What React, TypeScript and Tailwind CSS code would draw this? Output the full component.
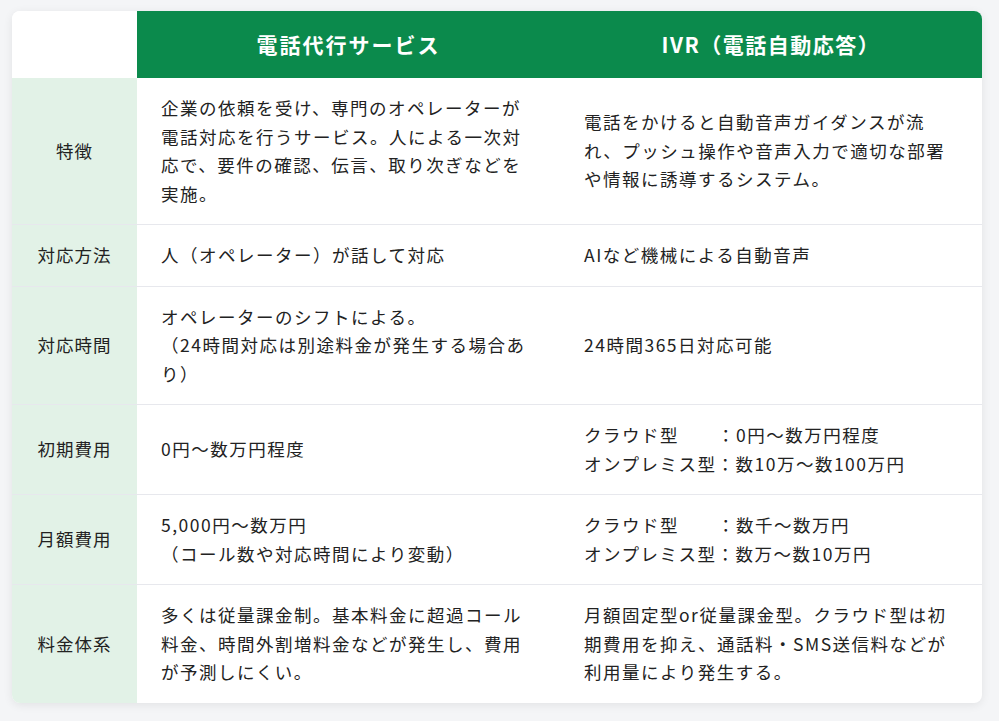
const rows: { label: string; service: string[]; ivr: string[] }[] = [
  {
    label: "特徴",
    service: ["企業の依頼を受け、専門のオペレーターが電話対応を行うサービス。人による一次対応で、要件の確認、伝言、取り次ぎなどを実施。"],
    ivr: ["電話をかけると自動音声ガイダンスが流れ、プッシュ操作や音声入力で適切な部署や情報に誘導するシステム。"],
  },
  {
    label: "対応方法",
    service: ["人（オペレーター）が話して対応"],
    ivr: ["AIなど機械による自動音声"],
  },
  {
    label: "対応時間",
    service: ["オペレーターのシフトによる。", "（24時間対応は別途料金が発生する場合あり）"],
    ivr: ["24時間365日対応可能"],
  },
  {
    label: "初期費用",
    service: ["0円〜数万円程度"],
    ivr: ["クラウド型　　：0円〜数万円程度", "オンプレミス型：数10万〜数100万円"],
  },
  {
    label: "月額費用",
    service: ["5,000円〜数万円", "（コール数や対応時間により変動）"],
    ivr: ["クラウド型　　：数千〜数万円", "オンプレミス型：数万〜数10万円"],
  },
  {
    label: "料金体系",
    service: ["多くは従量課金制。基本料金に超過コール料金、時間外割増料金などが発生し、費用が予測しにくい。"],
    ivr: ["月額固定型or従量課金型。クラウド型は初期費用を抑え、通話料・SMS送信料などが利用量により発生する。"],
  },
];

const font = { fontFamily: '"Noto Sans CJK JP", "Noto Sans", sans-serif' };

export default function App() {
  return (
    <div className="min-h-screen bg-[#f4f5f7] px-3 pt-[11px] pb-4" style={font}>
      <div className="w-[970px] overflow-hidden rounded-lg bg-white shadow-[0_2px_10px_rgba(0,0,0,0.08)]">
        {/* Header */}
        <div className="grid grid-cols-[125px_423px_422px]">
          <div className="bg-white" />
          <div className="flex h-[67px] items-center justify-center bg-[#0b8a4c] text-[21px] font-bold tracking-[2px] text-white">
            電話代行サービス
          </div>
          <div className="flex h-[67px] items-center justify-center bg-[#0b8a4c] text-[21px] font-bold tracking-[1.5px] text-white">
            IVR（電話自動応答）
          </div>
        </div>

        {/* Body rows */}
        {rows.map((row, i) => (
          <div
            key={row.label}
            className={`grid grid-cols-[125px_423px_422px] text-[17.5px] leading-[28.5px] tracking-[1.5px] text-[#222] ${
              i < rows.length - 1 ? "border-b border-[#e7e8ed]" : ""
            }`}
          >
            <div className="flex items-center justify-center bg-[#e2f2e7] tracking-[1px]">{row.label}</div>
            <div className="flex flex-col justify-center px-6 py-4">
              {row.service.map((t) => (
                <p key={t}>{t}</p>
              ))}
            </div>
            <div className="flex flex-col justify-center px-6 py-4">
              {row.ivr.map((t) => (
                <p key={t} className="whitespace-pre-wrap">
                  {t}
                </p>
              ))}
            </div>
          </div>
        ))}
      </div>
    </div>
  );
}
